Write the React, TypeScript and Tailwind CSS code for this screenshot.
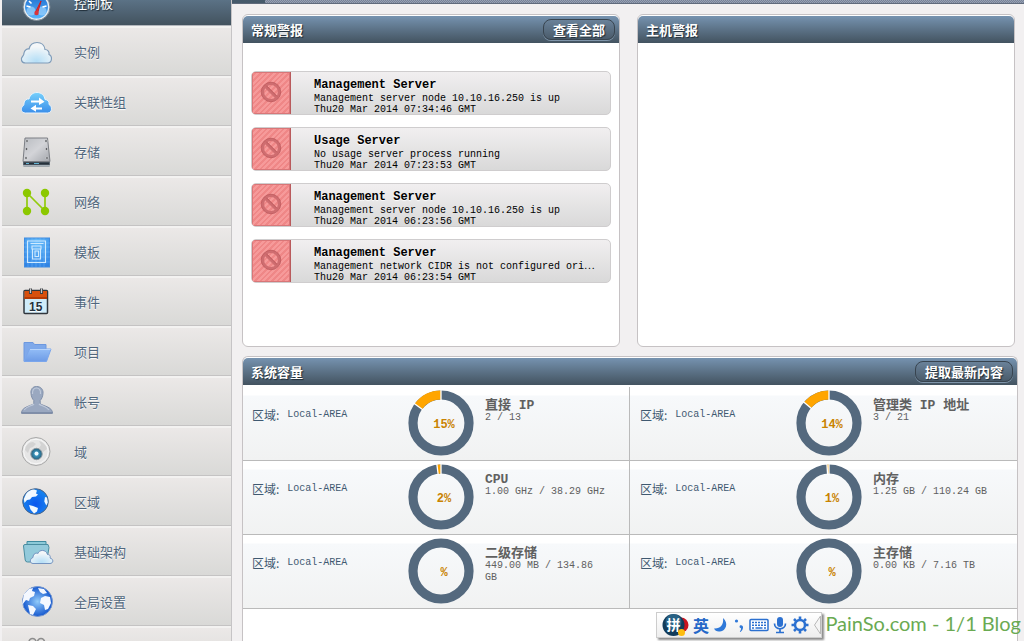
import type { ReactNode } from "react";

const cjk = "font-['Noto_Sans_CJK_SC',sans-serif]";
const mono = "font-['Liberation_Mono','Noto_Sans_CJK_SC',monospace]";

function Icon({ children }: { children: ReactNode }) {
  return (
    <svg viewBox="0 0 36 36" className="size-9 shrink-0" aria-hidden="true">
      {children}
    </svg>
  );
}

const cloudPath =
  "M7.5 29C3 29 2.5 24.500 4.500 22.500C6 21 6 21 6 19C6.500 16 9 14.500 11 15C12 10.500 15.500 8.500 19 8.500C23.500 8.500 26.500 11.500 27 15.500C30 15.500 31.500 18 31 20.500C34.500 22 34.500 29 29.500 29Z";

const DashboardIcon = (
  <Icon>
    <defs>
      <linearGradient id="dash" x1="0" y1="0" x2="0" y2="1">
        <stop offset="0" stopColor="#1f6fd0" />
        <stop offset="1" stopColor="#58b4fb" />
      </linearGradient>
    </defs>
    <circle cx="18.500" cy="22" r="13.500" fill="#e4ecf2" stroke="#77848f" />
    <circle cx="18.500" cy="22" r="11.500" fill="url(#dash)" />
    <circle cx="13" cy="26" r="4.500" fill="#9bd2fd" opacity=".7" />
    <circle cx="24" cy="26" r="4.500" fill="#9bd2fd" opacity=".7" />
    <path d="M8.500 21l4 1M28.500 21l-4 1M11 16l2.500 2.500" stroke="#fff" strokeWidth="1.600" />
    <path d="M23 16L17.500 27l2 1.500z" fill="#e53030" stroke="#ca2027" />
    <circle cx="18.500" cy="28" r="2.200" fill="#d8343a" />
  </Icon>
);

const InstanceIcon = (
  <Icon>
    <defs>
      <radialGradient id="cloud" cx=".5" cy=".9" r=".7">
        <stop offset="0" stopColor="#b4def6" />
        <stop offset="1" stopColor="#f4f7f9" />
      </radialGradient>
    </defs>
    <path d={cloudPath} fill="url(#cloud)" stroke="#7f9cb9" strokeWidth="1.200" />
  </Icon>
);

const AffinityIcon = (
  <Icon>
    <defs>
      <linearGradient id="aff" x1="0" y1="0" x2="0" y2="1">
        <stop offset="0" stopColor="#76d0fb" />
        <stop offset="1" stopColor="#3a8eea" />
      </linearGradient>
    </defs>
    <path d={cloudPath} fill="url(#aff)" stroke="#e9f3fb" />
    <path
      d="M13 16.500h8v-3l5.500 4.200L21 21v-2.500h-8zM24 23.500h-6v-2.700L12.500 24.500l5.500 3.300v-2.300h6z"
      fill="#fff"
    />
  </Icon>
);

const StorageIcon = (
  <Icon>
    <defs>
      <linearGradient id="disk" x1="0" y1="0" x2="1" y2="1">
        <stop offset="0" stopColor="#b9bcc1" />
        <stop offset=".5" stopColor="#d3d4d8" />
        <stop offset="1" stopColor="#a2a5ab" />
      </linearGradient>
    </defs>
    <path d="M5 27h27v4.500q0 1-1 1H6q-1 0-1-1z" fill="#5b6771" />
    <path d="M6 29.500h25" stroke="#26313b" strokeWidth="2" />
    <path d="M8 29.500h3M16 29.500h5" stroke="#62b3d2" />
    <path d="M5 31.700h27" stroke="#b8c2c9" />
    <path d="M7 4h22.500L32 27.500H5z" fill="url(#disk)" stroke="#7c7f85" />
    <g fill="#44474c" stroke="#eee" strokeWidth=".5">
      <circle cx="9" cy="7" r="1.200" />
      <circle cx="28" cy="7" r="1.200" />
      <circle cx="8.500" cy="15" r="1.200" />
      <circle cx="28.500" cy="15" r="1.200" />
      <circle cx="8" cy="24" r="1.200" />
      <circle cx="29" cy="24" r="1.200" />
    </g>
  </Icon>
);

const NetworkIcon = (
  <Icon>
    <path d="M9 27V9l18 18V9" fill="none" stroke="#92cb0c" strokeWidth="1.700" />
    <g fill="#8cc800">
      <circle cx="9" cy="9" r="4.200" />
      <circle cx="27" cy="9" r="4.200" />
      <circle cx="9" cy="27" r="4.200" />
      <circle cx="27" cy="27" r="4.200" />
    </g>
  </Icon>
);

const TemplateIcon = (
  <Icon>
    <defs>
      <radialGradient id="tpl" cx=".5" cy=".15" r=".9">
        <stop offset="0" stopColor="#66bdfb" />
        <stop offset="1" stopColor="#2f83e4" />
      </radialGradient>
    </defs>
    <rect x="6.500" y="4" width="25" height="29" fill="url(#tpl)" stroke="#3f8be0" />
    <path d="M10 4v29M14 4v29M18 4v29M22 4v29M26 4v29M6 9h26M6 13h26M6 18h26M6 23h26M6 28h26" stroke="#79bcf7" strokeWidth=".4" />
    <path d="M9.500 7h18v21.500h-18zM12.500 9.500h13M14 12h9v3h-9zM14.500 15v10h8V15M17 17h3.500v5.500H17z" fill="none" stroke="#cfeaff" strokeWidth="1.100" />
  </Icon>
);

const EventIcon = (
  <Icon>
    <rect x="6" y="6.500" width="23.500" height="23" rx="1" fill="#cfecfa" stroke="#30363c" strokeWidth="1.500" />
    <path d="M6.500 7H29v8H6.500z" fill="#d9500d" />
    <path d="M6.500 13H29v2H6.500z" fill="#b53a05" />
    <path d="M12.500 4.500V10M23.500 4.500V10" stroke="#3d3f42" strokeWidth="3" />
    <path d="M12.500 4.500V9M23.500 4.500V9" stroke="#c6c9cb" strokeWidth="1.200" />
    <text x="17.700" y="26.500" textAnchor="middle" fontFamily="Liberation Sans" fontWeight="700" fontSize="12" fill="#25313b">
      15
    </text>
  </Icon>
);

const ProjectIcon = (
  <Icon>
    <defs>
      <linearGradient id="fold" x1="0" y1="0" x2="0" y2="1">
        <stop offset="0" stopColor="#93bdf6" />
        <stop offset="1" stopColor="#6d9be6" />
      </linearGradient>
    </defs>
    <path d="M6 8.500h9l1.500 2H28V27H6z" fill="#7fa9ea" stroke="#6c98df" />
    <path d="M11.500 15H33l-4.500 12.500H6z" fill="url(#fold)" stroke="#7aa6ec" />
    <path d="M12 15.500h20.500" stroke="#b7d4fb" />
  </Icon>
);

const AccountIcon = (
  <Icon>
    <path
      d="M18.500 2.500c-4 0-6 3-5.500 7c.3 3.500 1.500 5.500 2.800 7v3c-2 2.500-12.300 3-12.300 9.700h31c0-6.700-10.300-7.200-12.300-9.700v-3c1.300-1.500 2.500-3.500 2.800-7c.4-4-2-7-6.500-7z"
      fill="#9aa8c0"
      stroke="#8190aa"
    />
    <path d="M14.500 10c-.3-4 1.500-6 4-6s4.500 2 4 6M6 26c3-4 8-4 10-6M31 26c-3-4-8-4-10-6" fill="none" stroke="#bfc9da" strokeWidth="1.200" />
    <path d="M3.500 29h31" stroke="#6a7a98" />
  </Icon>
);

const DomainIcon = (
  <Icon>
    <defs>
      <radialGradient id="dom">
        <stop offset="0" stopColor="#bfe6f5" />
        <stop offset=".4" stopColor="#3791b8" />
        <stop offset="1" stopColor="#29607c" />
      </radialGradient>
    </defs>
    <circle cx="18" cy="17.500" r="14" fill="#e6e6e6" stroke="#a9a9a9" />
    <circle cx="18" cy="17.500" r="12.300" fill="none" stroke="#f8f8f8" />
    <path d="M7 16c1-5 4-8 8-8l3 2-3 3-3 1-2 5zM21 7c4 1 7 4 8 8l-4 3-4-4 2-3z" fill="#d3d3d3" />
    <circle cx="18.500" cy="20" r="5.700" fill="url(#dom)" stroke="#8a979e" />
    <circle cx="18.500" cy="19.500" r="2" fill="#effaff" />
  </Icon>
);

const ZoneIcon = (
  <Icon>
    <defs>
      <radialGradient id="zone" cx=".5" cy=".6">
        <stop offset="0" stopColor="#0c57ee" />
        <stop offset="1" stopColor="#1580ee" />
      </radialGradient>
    </defs>
    <circle cx="17.500" cy="17.500" r="12.800" fill="url(#zone)" stroke="#4a6384" />
    <path
      d="M8 10c2-3 5-4.500 8-4.500l3 1-1 3 2 1-2 2-4 .5-2 2.500-3 .5-2.500 3-.7-4zM11 21l4 1 5 2-1 3.500-3 2-3.500-4zM27 13l2 .5.800 5-1.500 3-2-4z"
      fill="#f2f9ff"
    />
  </Icon>
);

const InfraIcon = (
  <Icon>
    <path d="M9 7.500h19v3H9z" fill="#8cc9d8" stroke="#3f8ba0" />
    <path d="M7 10.500h23l1 3L28.500 28H9.500q-2 0-2.300-2L5.500 12q0-1.500 1.500-1.500z" fill="#93cadb" stroke="#4a8da1" />
    <path
      d="M15 29.500c-3.500 0-3.500-5 0-6c0-4 3.500-5 5-4c1-4 8-4.500 9.500 1c3 0 3 2.500 2.500 3.500c4 1 3.500 5.500 0 5.500z"
      fill="url(#cloud)"
      stroke="#7393c0"
    />
  </Icon>
);

const GlobalIcon = (
  <Icon>
    <defs>
      <radialGradient id="glob">
        <stop offset="0" stopColor="#91cbfa" />
        <stop offset="1" stopColor="#1558cf" />
      </radialGradient>
    </defs>
    <circle cx="19.500" cy="17.500" r="15" fill="url(#glob)" stroke="#7798cf" />
    <path
      d="M6 10l5-5 4-1-1 3 3 1-1 4-4 2-1 3-3-1-4 5zM10 21l5 1 3 3-3 6-3-1zM20 4l6 1 3 4-4 1-3-2zM23 14l4-2 5 1 1 6-3 6-3 1-1-5-4-2z"
      fill="#f4f8ff"
    />
  </Icon>
);

const ServiceIcon = (
  <Icon>
    <g fill="none" stroke="#8d8d8d" strokeWidth="1.600">
      <circle cx="14.500" cy="8" r="3.500" />
      <circle cx="23" cy="8" r="3.500" />
      <path d="M6 32c0-16 24-16 24 0z" />
    </g>
  </Icon>
);

const navItems: { label: string; icon: ReactNode; active?: boolean }[] = [
  { label: "控制板", icon: DashboardIcon, active: true },
  { label: "实例", icon: InstanceIcon },
  { label: "关联性组", icon: AffinityIcon },
  { label: "存储", icon: StorageIcon },
  { label: "网络", icon: NetworkIcon },
  { label: "模板", icon: TemplateIcon },
  { label: "事件", icon: EventIcon },
  { label: "项目", icon: ProjectIcon },
  { label: "帐号", icon: AccountIcon },
  { label: "域", icon: DomainIcon },
  { label: "区域", icon: ZoneIcon },
  { label: "基础架构", icon: InfraIcon },
  { label: "全局设置", icon: GlobalIcon },
  { label: "", icon: ServiceIcon },
];

const alerts = [
  { title: "Management Server", text: "Management server node 10.10.16.250 is up", date: "Thu20 Mar 2014 07:34:46 GMT" },
  { title: "Usage Server", text: "No usage server process running", date: "Thu20 Mar 2014 07:23:53 GMT" },
  { title: "Management Server", text: "Management server node 10.10.16.250 is up", date: "Thu20 Mar 2014 06:23:56 GMT" },
  { title: "Management Server", text: "Management network CIDR is not configured ori⋯", date: "Thu20 Mar 2014 06:23:54 GMT" },
];

const capacities = [
  { name: "直接 IP", value: "2 / 13", percent: 15 },
  { name: "管理类 IP 地址", value: "3 / 21", percent: 14 },
  { name: "CPU", value: "1.00 GHz / 38.29 GHz", percent: 2 },
  { name: "内存", value: "1.25 GB / 110.24 GB", percent: 1 },
  { name: "二级存储", value: "449.00 MB / 134.86 GB", percent: 0 },
  { name: "主存储", value: "0.00 KB / 7.16 TB", percent: 0 },
];

function Panel({ title, action, className = "", children }: { title: string; action?: string; className?: string; children?: ReactNode }) {
  return (
    <section className={`rounded-md border border-[#c6c2c4] bg-white pt-px ${className}`}>
      <header className="flex h-[27px] items-center justify-between rounded-t-[5px] bg-linear-to-b from-[#7693b0] to-[#435360] pr-1 pl-2">
        <h2 className="text-[13px] leading-5 font-bold text-white [text-shadow:1px_1px_1px_#1d2b36]">{title}</h2>
        {action && (
          <button
            type="button"
            className="h-[21px] rounded-lg border border-[#38444f] bg-linear-to-b from-[#6a829a] to-[#4a5b6a] px-[9px] text-[13px] leading-[18px] font-bold text-white shadow-[0_1px_0_#7f95aa] [text-shadow:1px_1px_1px_#1d2b36]"
          >
            {action}
          </button>
        )}
      </header>
      {children}
    </section>
  );
}

function Ring({ percent }: { percent: number }) {
  const r = 28;
  const length = 2 * Math.PI * r;
  const point = (share: number, radius: number) => {
    const a = -Math.PI / 2 - share * 2 * Math.PI;
    return `${33 + radius * Math.cos(a)} ${33 + radius * Math.sin(a)}`;
  };
  const share = percent / 100;
  return (
    <svg viewBox="0 0 66 66" className="size-[66px]" role="img" aria-label={`${percent}%`}>
      <circle cx="33" cy="33" r={r} fill="none" stroke="#54697e" strokeWidth="9.200" />
      {percent > 0 && (
        <>
          <circle
            cx="33"
            cy="33"
            r={r}
            fill="none"
            stroke="#ffa500"
            strokeWidth="9.200"
            strokeDasharray={`${length * share} ${length}`}
            transform={`rotate(${-90 - 360 * share} 33 33)`}
          />
          <path d={`M${point(0, 22)}L${point(0, 34)}M${point(share, 22)}L${point(share, 34)}`} stroke="#fff" strokeWidth="1.300" />
        </>
      )}
    </svg>
  );
}

export default function App() {
  return (
    <div className={`relative flex h-screen overflow-hidden bg-[#f2f0f1] ${cjk}`}>
      <nav className="ml-0.5 w-[230px] shrink-0 border-r border-[#c6c4c6]">
        <ul className="-mt-6">
          {navItems.map((item, i) => (
            <li key={i}>
              <a
                href="#"
                aria-label={item.label || "more"}
                className={`flex h-[50px] items-center border-b pl-4 text-[13px] ${
                  item.active
                    ? "border-[#b3b7bd] bg-linear-to-b from-[#7391ad] to-[#43535f] pt-1 text-white [text-shadow:1px_1px_1px_#1d2b36]"
                    : "border-[#c4c3c3] bg-linear-to-b from-[#ece9e8] to-[#d9d9d7] pt-0.5 text-[#51677d] shadow-[inset_0_2px_0_#f3f2f1] [text-shadow:0_1px_1px_#fff]"
                }`}
              >
                {item.icon}
                <span className="pl-5">{item.label}</span>
              </a>
            </li>
          ))}
        </ul>
      </nav>

      <main className="flex min-w-0 grow flex-col">
        <div className="flex h-1 shrink-0 border-b border-[#5f6a7b]">
          <div className="w-[33px] bg-[#465a6b]" />
          <div className="grow bg-[repeating-conic-gradient(#98a1b1_0_25%,#76829a_0_50%)] bg-[length:2px_2px]" />
        </div>

        <div className="flex grow flex-col pt-[10px] pr-[6px] pl-[10px]">
          <div className="grid grid-cols-2 gap-[17px] pr-[3px]">
            <Panel title="常规警报" action="查看全部" className="h-[333px]">
              <ul className="flex flex-col gap-3 px-2 pt-7">
                {alerts.map((alert, i) => (
                  <li
                    key={i}
                    className="flex h-11 overflow-hidden rounded-[5px] border border-[#cfcdce] bg-linear-to-b from-[#f1eff0] to-[#d9d9d9]"
                  >
                    <div className="flex w-[39px] shrink-0 items-center justify-center border-r border-[#b95a5c] bg-[repeating-linear-gradient(135deg,#f69a9a_0px,#f69a9a_2px,#ef8787_2px,#ef8787_4px)] pb-0.5 shadow-[inset_0_0_0_1px_#d87678]">
                      <svg viewBox="0 0 22 22" className="size-[22px]" fill="none" aria-hidden="true">
                        <circle cx="11" cy="11" r="8.300" stroke="#cf6d70" strokeWidth="2.800" />
                        <path d="M5 5l12 12" stroke="#cf6d70" strokeWidth="3" />
                        <path d="M6.500 4.800l10.500 10.500" stroke="#b04d50" strokeWidth=".7" />
                        <circle cx="11" cy="11" r="9.800" stroke="#b04d50" strokeWidth=".6" />
                      </svg>
                    </div>
                    <div className={`min-w-0 grow pt-1.5 pl-[23px] text-black ${mono}`}>
                      <h3 className="text-[12px] leading-[15px] font-bold [text-shadow:0_1px_1px_#fff]">{alert.title}</h3>
                      <p className="truncate text-[10px] leading-[11px]">{alert.text}</p>
                      <p className="text-[10px] leading-[11px]">{alert.date}</p>
                    </div>
                  </li>
                ))}
              </ul>
            </Panel>
            <Panel title="主机警报" />
          </div>

          <Panel title="系统容量" action="提取最新内容" className="mt-[9px] grow rounded-b-none border-b-0">
            <ul className="grid grid-cols-2 pt-0.5">
              {capacities.map((item) => (
                <li
                  key={item.name}
                  className="flex h-[74px] border-b border-[#bababa] bg-[linear-gradient(to_bottom,#fff_0px,#fff_8px,#f7f9fb_9px,#f1f2f2_73px)] odd:border-r even:pl-px"
                >
                  <p className="flex w-[165px] shrink-0 gap-2 pt-5 pl-[9px] leading-4 text-[#3f5971]">
                    <span className="text-[12px]">区域:</span>
                    <span className={`text-[10px] ${mono}`}>Local-AREA</span>
                  </p>
                  <div className="relative shrink-0 pt-[3px]">
                    <Ring percent={item.percent} />
                    <span className={`absolute inset-0 flex items-center justify-center pt-0.5 pl-1.5 text-[12px] font-bold text-[#c98300] ${mono}`}>
                      {item.percent > 0 ? item.percent : ""}%
                    </span>
                  </div>
                  <div className="w-[133px] shrink-0 pt-3 pl-[11px] text-[#606060]">
                    <h3 className={`text-[13px] leading-[13px] font-bold whitespace-nowrap ${mono}`}>{item.name}</h3>
                    <p className={`text-[10px] leading-3 ${mono}`}>{item.value}</p>
                  </div>
                </li>
              ))}
            </ul>
          </Panel>
        </div>
      </main>

      <div className="absolute right-[3px] bottom-0 flex items-center">
        <div className="flex h-[26px] w-[166px] items-center justify-between border border-[#cdcdcd] bg-linear-to-b from-white to-[#eeeeee] pl-1 text-[#2568c8] shadow-[2px_2px_2px_#8b8b8b]">
          <svg viewBox="0 0 28 24" className="h-6 w-7" aria-hidden="true">
            <circle cx="20" cy="12" r="7.500" fill="#c9141f" />
            <circle cx="12.500" cy="12" r="11" fill="#123c5b" />
            <circle cx="12.500" cy="9" r="8" fill="#397ba2" opacity=".6" />
            <text x="12.500" y="17" textAnchor="middle" fontFamily="Noto Sans CJK SC" fontSize="14" fontWeight="700" fill="#fff">
              拼
            </text>
            <circle cx="20.500" cy="19.500" r="3.500" fill="#fdbd10" />
          </svg>
          <span className="text-[16px] leading-6 font-bold">英</span>
          <svg viewBox="0 0 16 16" className="size-4" aria-hidden="true">
            <path d="M10 1c6 5 3 13-3 13.500C4 15 2 13.500 1 11.500C7 12 11 8 10 1z" fill="#2f78d8" />
          </svg>
          <svg viewBox="0 0 12 16" className="h-4 w-3" aria-hidden="true">
            <circle cx="3.500" cy="4" r="1.600" fill="#2f78d8" />
            <path d="M7 8.500c4-1 4 4 .5 6.500l-.7-.6c1.200-1.500 1.500-2.400 1-3.400c-1 .2-1.800-1.300-.8-2.500z" fill="#2f78d8" />
          </svg>
          <svg viewBox="0 0 20 14" className="h-[14px] w-5" aria-hidden="true">
            <rect x="1" y="1.500" width="18" height="11" rx="1" fill="#fff" stroke="#2b70d0" strokeWidth="1.500" />
            <path d="M3 4.500h14M3 7.200h14" stroke="#2b70d0" strokeWidth="1.600" strokeDasharray="2 1" />
            <path d="M3 10h2M6.500 10h7M15 10h2" stroke="#2b70d0" strokeWidth="1.600" />
          </svg>
          <svg viewBox="0 0 14 18" className="h-[18px] w-[14px]" fill="none" stroke="#2b70d0" aria-hidden="true">
            <rect x="4" y="1" width="6" height="10" rx="3" fill="#2b70d0" stroke="none" />
            <path d="M1.500 7.500c0 7 11 7 11 0M7 13v3.500M3 16.500h8" strokeWidth="1.700" />
          </svg>
          <svg viewBox="0 0 18 18" className="size-[18px]" fill="none" stroke="#2b70d0" aria-hidden="true">
            <circle cx="9" cy="9" r="5" strokeWidth="2.500" />
            <path d="M9 .5V3M9 15v2.500M.5 9H3M15 9h2.500M3 3l1.800 1.800M13.200 13.200L15 15M15 3l-1.800 1.800M4.800 13.200L3 15" strokeWidth="2.600" />
          </svg>
          <svg viewBox="0 0 8 24" className="h-6 w-2" aria-hidden="true">
            <path d="M7.500 3L1.500 12l6 9z" fill="#f5f5f5" stroke="#b9b9b9" />
          </svg>
        </div>
        <p className="w-[199px] pb-1 text-right font-['Lato',sans-serif] text-[20px] leading-7 whitespace-nowrap text-[#6aaa52]">
          PainSo.com - 1/1 Blog
        </p>
      </div>
    </div>
  );
}
